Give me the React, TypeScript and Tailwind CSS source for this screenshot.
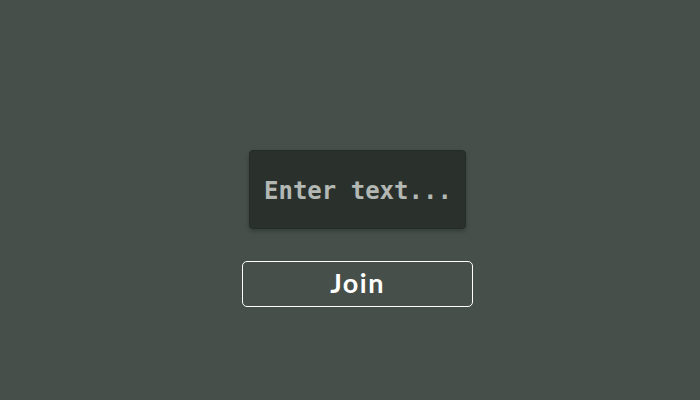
export default function App() {
  return (
    <div className="w-[700px] h-[400px] bg-[#464f4a] flex flex-col items-center pt-[150px] pl-[15px]">
      <input
        placeholder="Enter text..."
        className="w-[217px] h-[79px] rounded-[4px] bg-[#2a312d] border border-[#252b28] shadow-[0_2px_4px_rgba(0,0,0,0.25)] pl-[14px] pr-[8px] pt-[3px] text-[24px] font-bold font-['DejaVu_Sans_Mono',monospace] text-[#b3b8b4] placeholder:text-[#b3b8b4] outline-none"
      />
      <button className="mt-[32px] w-[231px] h-[46px] rounded-[5px] border border-white pb-[3px] text-white text-[27px] font-bold tracking-[1.5px] leading-none font-['Lato',sans-serif]">
        Join
      </button>
    </div>
  );
}
